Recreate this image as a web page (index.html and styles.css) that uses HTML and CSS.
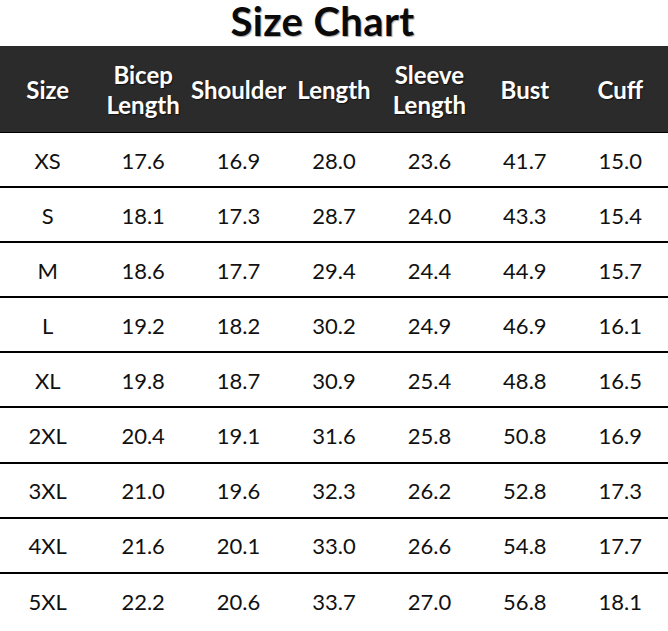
FILE: index.html
```html
<!DOCTYPE html>
<html>
<head>
<meta charset="utf-8">
<link rel="stylesheet" href="styles.css">
</head>
<body>
<div class="page">
  <h1 class="title">Size Chart</h1>
  <div class="chart">
    <div class="row head">
      <div class="cell">Size</div>
      <div class="cell">Bicep<br>Length</div>
      <div class="cell">Shoulder</div>
      <div class="cell">Length</div>
      <div class="cell">Sleeve<br>Length</div>
      <div class="cell">Bust</div>
      <div class="cell">Cuff</div>
    </div>
    <div class="row"><div class="cell">XS</div><div class="cell">17.6</div><div class="cell">16.9</div><div class="cell">28.0</div><div class="cell">23.6</div><div class="cell">41.7</div><div class="cell">15.0</div></div>
    <div class="row"><div class="cell">S</div><div class="cell">18.1</div><div class="cell">17.3</div><div class="cell">28.7</div><div class="cell">24.0</div><div class="cell">43.3</div><div class="cell">15.4</div></div>
    <div class="row"><div class="cell">M</div><div class="cell">18.6</div><div class="cell">17.7</div><div class="cell">29.4</div><div class="cell">24.4</div><div class="cell">44.9</div><div class="cell">15.7</div></div>
    <div class="row"><div class="cell">L</div><div class="cell">19.2</div><div class="cell">18.2</div><div class="cell">30.2</div><div class="cell">24.9</div><div class="cell">46.9</div><div class="cell">16.1</div></div>
    <div class="row"><div class="cell">XL</div><div class="cell">19.8</div><div class="cell">18.7</div><div class="cell">30.9</div><div class="cell">25.4</div><div class="cell">48.8</div><div class="cell">16.5</div></div>
    <div class="row"><div class="cell">2XL</div><div class="cell">20.4</div><div class="cell">19.1</div><div class="cell">31.6</div><div class="cell">25.8</div><div class="cell">50.8</div><div class="cell">16.9</div></div>
    <div class="row"><div class="cell">3XL</div><div class="cell">21.0</div><div class="cell">19.6</div><div class="cell">32.3</div><div class="cell">26.2</div><div class="cell">52.8</div><div class="cell">17.3</div></div>
    <div class="row"><div class="cell">4XL</div><div class="cell">21.6</div><div class="cell">20.1</div><div class="cell">33.0</div><div class="cell">26.6</div><div class="cell">54.8</div><div class="cell">17.7</div></div>
    <div class="row last"><div class="cell">5XL</div><div class="cell">22.2</div><div class="cell">20.6</div><div class="cell">33.7</div><div class="cell">27.0</div><div class="cell">56.8</div><div class="cell">18.1</div></div>
  </div>
</div>
</body>
</html>
```
FILE: styles.css
```css
html, body {
  margin: 0;
  padding: 0;
  background: #ffffff;
}
.page {
  width: 668px;
  font-family: Lato, "Open Sans", "Liberation Sans", sans-serif;
  color: #111111;
}
.title {
  margin: 0;
  height: 46px;
  line-height: 42px;
  text-align: center;
  font-size: 40px;
  font-weight: 700;
  letter-spacing: 0.4px;
  color: #0a0a0a;
  padding-right: 23px;
  text-shadow: 1px 1px 1px rgba(0, 0, 0, 0.35);
}
.chart {
  display: flex;
  flex-direction: column;
}
.row {
  display: grid;
  grid-template-columns: repeat(7, 1fr);
  height: 55.1px;
  box-sizing: border-box;
  border-bottom: 2px solid #000000;
}
.row.last {
  border-bottom: none;
}
.row.head {
  height: 87px;
  background: #2b2b2b;
  color: #ffffff;
  font-weight: 700;
  line-height: 30px;
  border-bottom: 1px solid #000000;
  text-shadow: 1px 1px 1px rgba(0, 0, 0, 0.6);
}
.cell {
  display: flex;
  align-items: center;
  justify-content: center;
  text-align: center;
  font-size: 22px;
}
.head .cell {
  font-size: 24px;
  white-space: nowrap;
}
.row .cell {
  padding-top: 1px;
}
```
